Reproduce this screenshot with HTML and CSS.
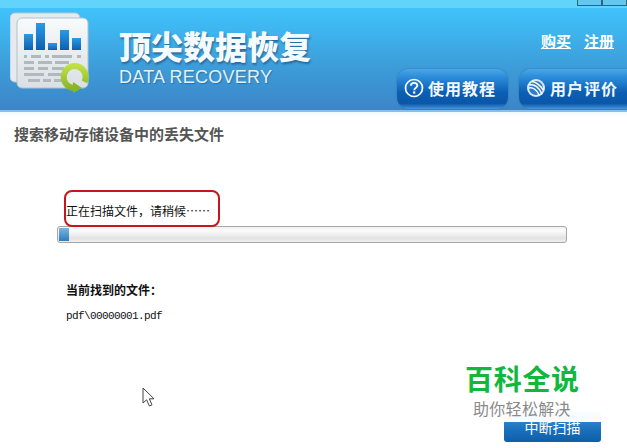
FILE: index.html
```html
<!DOCTYPE html>
<html lang="zh-CN">
<head>
<meta charset="utf-8">
<title>顶尖数据恢复</title>
<link rel="stylesheet" href="styles.css">
</head>
<body>
<div class="page">
  <header class="header">
    <div class="win-btns"><span class="win-btn"></span><span class="win-btn"></span></div>
    <svg class="logo" width="82" height="82" viewBox="0 0 82 82">
      <defs>
        <linearGradient id="bar" x1="0" y1="0" x2="0" y2="1"><stop offset="0" stop-color="#2a9be6"/><stop offset="1" stop-color="#0d5fb0"/></linearGradient>
        <linearGradient id="pg" x1="0" y1="0" x2="0" y2="1"><stop offset="0" stop-color="#f8fbfc"/><stop offset="1" stop-color="#d9dfe3"/></linearGradient>
        <linearGradient id="ring" x1="0" y1="0" x2="0" y2="1"><stop offset="0" stop-color="#bfe045"/><stop offset="1" stop-color="#8ab626"/></linearGradient>
      </defs>
      <rect x="0" y="1" width="70" height="69" rx="5" fill="#e4eaee" stroke="#b9c6d2"/>
      <rect x="7" y="6" width="71" height="70" rx="5" fill="url(#pg)" stroke="#b4c0cb"/>
      <g fill="url(#bar)">
        <rect x="14" y="22" width="9" height="16"/><rect x="26" y="11" width="9" height="27"/><rect x="38" y="31" width="9" height="7"/><rect x="50" y="18" width="9" height="20"/><rect x="62" y="26" width="9" height="12"/>
      </g>
      <g fill="#b3b8bc">
        <rect x="14" y="43" width="3" height="3"/><rect x="21" y="43" width="10" height="3"/><rect x="35" y="43" width="4" height="3"/><rect x="42" y="43" width="20" height="3"/><rect x="67" y="43" width="4" height="3"/>
        <rect x="14" y="49" width="10" height="3"/><rect x="28" y="49" width="14" height="3"/><rect x="45" y="49" width="14" height="3"/>
        <rect x="14" y="55" width="10" height="3"/><rect x="28" y="55" width="10" height="3"/><rect x="42" y="55" width="12" height="3"/>
        <rect x="14" y="61" width="20" height="3"/><rect x="38" y="61" width="14" height="3"/>
        <rect x="18" y="67" width="12" height="3"/><rect x="33" y="67" width="8" height="3"/><rect x="44" y="67" width="12" height="3"/>
      </g>
      <path d="M74.5 70 A11 11 0 1 0 64 76" fill="none" stroke="url(#ring)" stroke-width="6"/>
      <path d="M63 70 L72 76 L63 81 Z" fill="#8ab626"/>
    </svg>
    <div class="brand">
      <div class="brand-cn">顶尖数据恢复</div>
      <div class="brand-en">DATA RECOVERY</div>
    </div>
    <div class="actions">
      <nav class="links"><a class="link" href="#">购买</a><a class="link" href="#">注册</a></nav>
      <div class="buttons">
        <a class="pill" href="#">
          <svg width="20" height="20" viewBox="0 0 20 20"><circle cx="10" cy="10" r="8.5" fill="none" stroke="#fff" stroke-width="1.7"/><path d="M6.8 7.6C7 5.6 8.4 4.9 10 4.9c1.9 0 3.3 1 3.3 2.7 0 2.4-3.1 2.3-3.1 4.6" fill="none" stroke="#fff" stroke-width="1.8"/><rect x="9.1" y="13.4" width="2.2" height="2.2" fill="#fff"/></svg>
          <span>使用教程</span>
        </a>
        <a class="pill pill-wide" href="#">
          <svg width="20" height="20" viewBox="0 0 20 20"><circle cx="10" cy="10" r="9" fill="#dfeaf4"/><circle cx="10" cy="10" r="7" fill="#2a7ecb"/><path d="M3.5 7C8 5.5 13 9 16 16M3 10c4-1 8 2 10 7M6 3.5C10 4 15 8 17 12" fill="none" stroke="#fff" stroke-width="1.5"/></svg>
          <span>用户评价</span>
        </a>
      </div>
    </div>
  </header>
  <main class="main">
    <h1 class="heading">搜索移动存储设备中的丢失文件</h1>
    <div class="status">
      <span class="status-ring"></span>
      <p class="status-text">正在扫描文件，请稍候……</p>
    </div>
    <div class="progress"><div class="progress-fill"></div></div>
    <h2 class="found-title">当前找到的文件：</h2>
    <p class="found-file">pdf\00000001.pdf</p>
    <div class="footer"><button class="stop" type="button">中断扫描</button></div>
  </main>
  <svg class="cursor" width="14" height="20" viewBox="0 0 14 20"><path d="M1 1V16L4.6 12.8 7.4 19 10 17.8 7.3 11.8H12Z" fill="#fff" stroke="#444" stroke-width="1"/></svg>
  <div class="watermark">
    <div class="wm-title">百科全说</div>
    <div class="wm-sub">助你轻松解决</div>
  </div>
</div>
</body>
</html>
```
FILE: styles.css
```css
* { box-sizing: border-box; }
html, body { margin: 0; padding: 0; background: #fff; }
.page {
  position: relative;
  width: 627px;
  height: 448px;
  overflow: hidden;
  font-family: "Noto Sans CJK SC", "Liberation Sans", sans-serif;
  background: #fff;
}
.header {
  position: relative;
  display: flex;
  height: 112px;
  padding: 4px 0 0 10px;
  background: linear-gradient(#3fc2fa 0, #3fbdf6 10%, #3d9bd8 60%, #3c86c8 98%);
  border-top: 8px solid #62d3fb;
  border-bottom: 2px solid #8dbfe6;
  background-clip: padding-box;
}
.win-btns {
  position: absolute;
  top: -8px;
  right: 0;
  display: flex;
}
.win-btn {
  width: 25px;
  height: 6px;
  background: #62c8ee;
  border: 1px solid #35617a;
  border-top: 0;
}
.logo { flex: none; }
.brand { margin: 14px 0 0 27px; width: 221px; }
.brand-cn {
  font-size: 32px;
  line-height: 38px;
  font-weight: 900;
  color: #f4fbff;
  white-space: nowrap;
  text-shadow: 1px 2px 2px #2a6a9c;
}
.brand-en {
  margin-top: 1px;
  font-family: "Liberation Sans", sans-serif;
  font-size: 18px;
  line-height: 24px;
  letter-spacing: 0.25px;
  color: #e0f2fb;
  white-space: nowrap;
  text-shadow: 1px 1px 1px #2f6f9f;
}
.actions {
  flex: 1;
  display: flex;
  flex-direction: column;
  align-items: flex-end;
}
.links {
  display: flex;
  gap: 13px;
  margin: 18px 13px 0 0;
}
.link {
  font-size: 15px;
  line-height: 22px;
  font-weight: 700;
  color: #fff;
  text-decoration: underline;
  white-space: nowrap;
}
.buttons {
  display: flex;
  gap: 11px;
  margin-top: 17px;
}
.pill {
  display: flex;
  align-items: center;
  gap: 4px;
  width: 111px;
  height: 40px;
  padding: 0 0 2px 7px;
  border-radius: 12px;
  background: linear-gradient(#4aa6e6 0, #2a8ad8 22%, #0c5fb4 58%, #0b56a8 86%, #4595dc 100%);
  color: #f2f8fd;
  font-size: 16px;
  font-weight: 700;
  letter-spacing: 1px;
  text-decoration: none;
  white-space: nowrap;
  box-shadow: 0 0 2px #2c6fa8;
}
.pill-wide { width: 108px; border-radius: 12px 0 0 12px; }
.main {
  display: flow-root;
  padding: 0 14px;
  background: linear-gradient(#f0fbfd, #fff 6px);
}
.heading {
  margin: 12px 0 0;
  font-size: 15px;
  line-height: 20px;
  font-weight: 700;
  color: #555;
  white-space: nowrap;
}
.status {
  position: relative;
  margin: 57px 0 0 52px;
}
.status-text {
  margin: 0;
  font-size: 12px;
  line-height: 20px;
  color: #111;
  white-space: nowrap;
}
.status-ring {
  position: absolute;
  left: -2px;
  top: -11px;
  width: 156px;
  height: 37px;
  border: 2px solid #c4161c;
  border-radius: 8px;
}
.progress {
  width: 510px;
  height: 17px;
  margin: 5px 0 0 43px;
  border: 1px solid #a6a6a6;
  border-radius: 3px;
  padding: 1px;
  background: linear-gradient(#f0f0f0, #fbfbfb 25%, #e2e2e2 75%, #efefef);
}
.progress-fill {
  width: 10px;
  height: 100%;
  background: linear-gradient(#7cb4e0, #2e7cc0);
}
.found-title {
  margin: 38px 0 0 52px;
  font-size: 12px;
  line-height: 18px;
  font-weight: 700;
  color: #111;
  white-space: nowrap;
}
.found-file {
  margin: 10px 0 0 52px;
  font-family: "Liberation Mono", monospace;
  font-size: 11px;
  line-height: 14px;
  letter-spacing: -0.6px;
  color: #111;
  white-space: nowrap;
}
.footer {
  display: flex;
  justify-content: flex-end;
  margin: 89px 12px 0 0;
}
.stop {
  width: 97px;
  height: 30px;
  padding: 0;
  border: 0;
  border-radius: 3px;
  background: linear-gradient(#3f96d8, #1a70bc 60%, #0f5ea8);
  color: #fff;
  font-family: inherit;
  font-size: 14px;
  line-height: 30px;
}
.cursor {
  position: absolute;
  left: 142px;
  top: 387px;
}
.watermark {
  position: absolute;
  left: 460px;
  top: 358px;
  width: 145px;
  height: 64px;
  padding-left: 5px;
  background: rgba(255, 255, 255, 0.97);
}
.wm-title {
  font-size: 28px;
  line-height: 40px;
  font-weight: 700;
  letter-spacing: 0.7px;
  color: #12b83e;
  white-space: nowrap;
}
.wm-sub {
  margin: 0 0 0 8px;
  font-size: 16px;
  line-height: 20px;
  color: #8a8a8a;
  white-space: nowrap;
  letter-spacing: 0.3px;
}
```
